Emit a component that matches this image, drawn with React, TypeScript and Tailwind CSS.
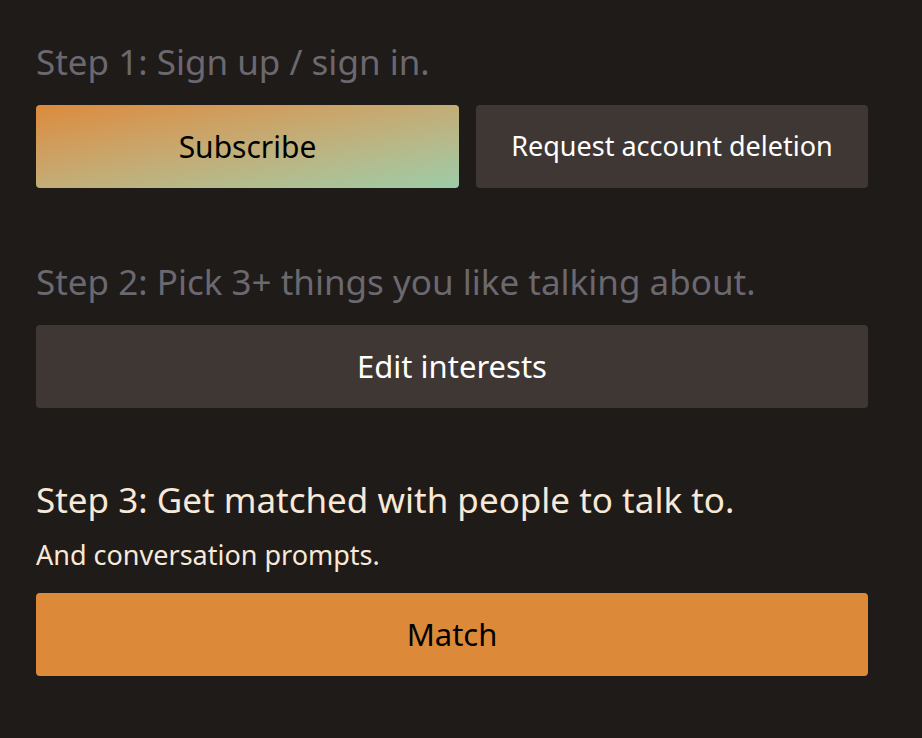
export default function App() {
  return (
    <div className="min-h-screen w-full bg-[#1f1b19] pl-9 pr-[54px] pt-[38px] pb-16 font-['Noto_Sans',sans-serif]">
      {/* Step 1 */}
      <h2 className="text-[35px] leading-[48px] text-[#6b6870]">Step 1: Sign up / sign in.</h2>
      <div className="mt-[19px] flex gap-[17px]">
        <button className="h-[83px] w-[423px] rounded-[4px] bg-gradient-to-br from-[#dc8a3a] to-[#9ccca8] text-[30px] text-black">
          Subscribe
        </button>
        <button className="h-[83px] flex-1 rounded-[4px] bg-[#3f3733] text-[27px] text-white">
          Request account deletion
        </button>
      </div>

      {/* Step 2 */}
      <h2 className="mt-[70px] text-[35px] leading-[48px] text-[#6b6870]">Step 2: Pick 3+ things you like talking about.</h2>
      <button className="mt-[19px] h-[83px] w-full rounded-[4px] bg-[#3f3733] text-[31px] text-white">
        Edit interests
      </button>

      {/* Step 3 */}
      <h2 className="mt-[68px] text-[35px] leading-[48px] text-[#f7e8d8]">Step 3: Get matched with people to talk to.</h2>
      <p className="mt-[14px] text-[27px] leading-[34px] text-[#f7e8d8]">And conversation prompts.</p>
      <button className="mt-[21px] h-[83px] w-full rounded-[4px] bg-[#dc8a3a] text-[31px] text-black">
        Match
      </button>
    </div>
  );
}
